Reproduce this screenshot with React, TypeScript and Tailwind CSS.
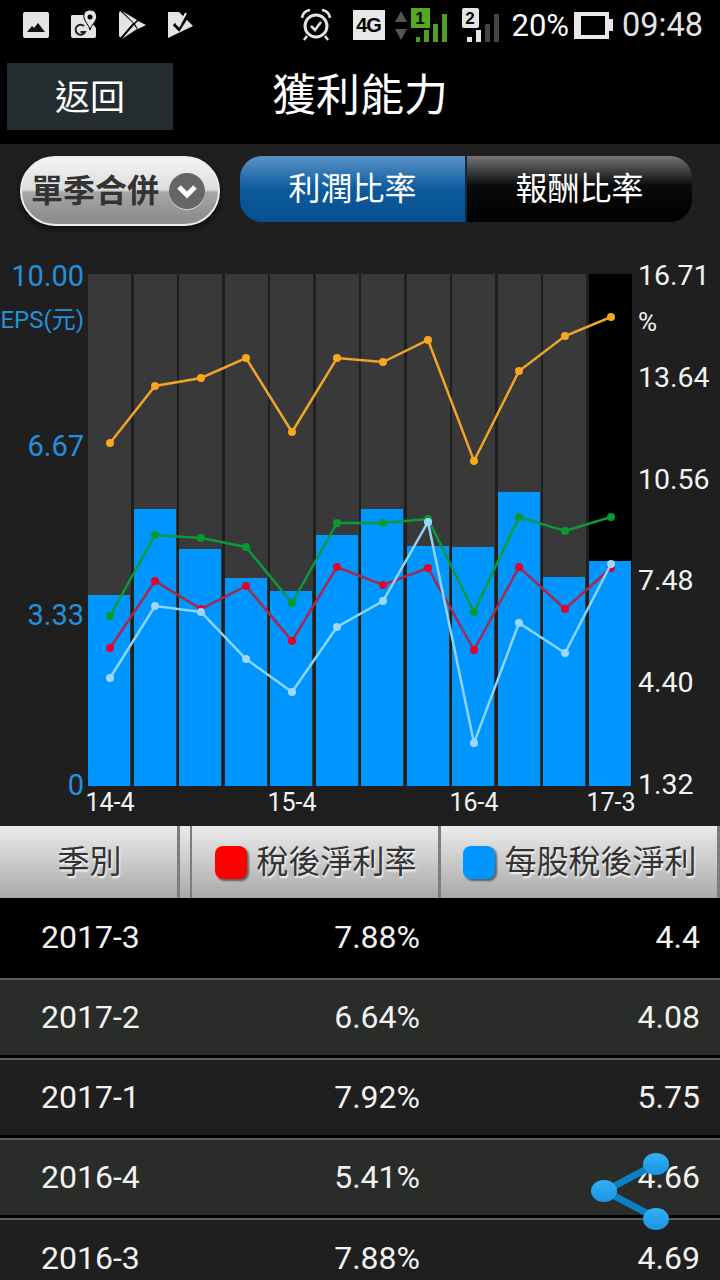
const xs = [110, 155, 201, 246, 292, 337, 383, 428, 474, 519, 565, 611];

const barTops = [595, 509, 549, 578, 591, 535, 509, 546, 547, 492, 577, 561];

const series = [
  { line: '#f0a428', dot: '#f7a81b', ys: [443, 386, 378, 358, 432, 358, 362, 340, 461, 371, 336, 317] },
  { line: '#0a9a3c', dot: '#089a2c', ys: [616, 535, 538, 547, 603, 523, 523, 519, 612, 517, 531, 517] },
  { line: '#a82a48', dot: '#e6002a', ys: [648, 581, 609, 586, 641, 567, 585, 568, 650, 567, 609, 568] },
  { line: '#8fd4f8', dot: '#9bd8fb', ys: [678, 606, 612, 659, 692, 627, 601, 522, 743, 623, 653, 564] },
];

const xLabels: [string, number][] = [['14-4', 22], ['15-4', 204], ['16-4', 386], ['17-3', 523]];

const rows = [
  ['2017-3', '7.88%', '4.4'],
  ['2017-2', '6.64%', '4.08'],
  ['2017-1', '7.92%', '5.75'],
  ['2016-4', '5.41%', '4.66'],
  ['2016-3', '7.88%', '4.69'],
];

const rowStyles = [
  'bg-black',
  'bg-[#2a2c2a] border-t-2 border-b-[3px] border-t-[#5e605e] border-b-black',
  'bg-[#1f1f1f] border-t-2 border-b-[3px] border-t-[#5e605e] border-b-black',
  'bg-[#2a2c2a] border-t-2 border-b-[3px] border-t-[#5e605e] border-b-black',
  'bg-[#1f1f1f] border-t-2 border-t-[#5e605e]',
];

const sans = "font-['Roboto','Noto_Sans_CJK_TC',sans-serif]";
const cjk = "font-['Noto_Sans_CJK_TC',sans-serif]";

function StatusIcons() {
  return (
    <div className="flex items-center">
      {/* picture */}
      <svg width="26" height="26" viewBox="0 0 26 26" className="ml-[23px]">
        <rect x="0" y="0" width="26" height="26" rx="2" fill="#e4e4e4" />
        <path d="M4 20 L9 14 L11 16 L15 11 L22 20 Z" fill="#111" />
      </svg>
      {/* maps */}
      <svg width="28" height="30" viewBox="0 0 28 30" className="ml-[21px]">
        <path d="M2 5 H16 L26 18 V26 Q26 28 24 28 H3 Q1 28 1 26 V6 Z" fill="#e4e4e4" />
        <path d="M20 0 C15 0 13 4 14 8 C15 12 19 15 20 20 C21 15 26 12 26.500 8 C27 4 25 0 20 0 Z" fill="#e4e4e4" stroke="#000" strokeWidth="1" />
        <circle cx="20" cy="7" r="2.500" fill="#000" />
        <path d="M14 16 A5 5 0 1 0 15 22 H10.500" fill="none" stroke="#222" strokeWidth="2" />
      </svg>
      {/* play store */}
      <svg width="28" height="30" viewBox="0 0 28 30" className="ml-[21px]">
        <path d="M1 1 L14 13 L2 27 Q0 28 0 25 V3 Z M3 1 L18 10 L15 13 Z M16 14 L19 11 L27 15 L19 19 Z M15 15 L18 19 L3 29 Z" fill="#e4e4e4" />
      </svg>
      {/* tasks */}
      <svg width="26" height="28" viewBox="0 0 26 28" className="ml-[20px]">
        <path d="M1 1 L12 1 L26 15 L1 27 Z" fill="#e4e4e4" />
        <path d="M7 13 L12 18 L22 2" fill="none" stroke="#000" strokeWidth="3.500" />
        <path d="M9 12 L12 15 L19 2" fill="none" stroke="#e4e4e4" strokeWidth="2" />
      </svg>
    </div>
  );
}

function StatusRight() {
  return (
    <div className="flex items-center">
      {/* alarm */}
      <svg width="30" height="32" viewBox="0 0 30 32">
        <circle cx="15" cy="17" r="11" fill="none" stroke="#e4e4e4" strokeWidth="3" />
        <path d="M10 17 L14 21 L20 13" fill="none" stroke="#e4e4e4" strokeWidth="2.500" />
        <path d="M1 9 Q2 2 9 1 M29 9 Q28 2 21 1 M6 27 L3 31 M24 27 L27 31" fill="none" stroke="#e4e4e4" strokeWidth="2.500" />
      </svg>
      <span className="ml-[22px] flex h-[30px] w-[32px] items-center justify-center bg-[#e8e8e8] font-['Liberation_Sans',sans-serif] text-[20px] font-bold tracking-[-1px] text-black">
        4G
      </span>
      <svg width="14" height="32" viewBox="0 0 14 32" className="ml-[9px]">
        <path d="M7 2 L13 13 H1 Z M1 20 H13 L7 31 Z" fill="#555" />
      </svg>
      <div className="ml-[3px] flex">
        <div className="relative flex h-[34px] w-[36px] items-end gap-[4px] pl-[5px]">
          <span className="h-[5px] w-[5px] bg-[#4f9d27]" />
          <span className="h-[12px] w-[5px] bg-[#4f9d27]" />
          <span className="h-[18px] w-[5px] bg-[#4f9d27]" />
          <span className="h-[28px] w-[5px] bg-[#4f9d27]" />
          <span className="absolute left-0 top-0 flex h-[20px] w-[19px] items-center justify-center bg-[#55a820] font-['Liberation_Sans',sans-serif] text-[17px] font-bold leading-none text-black">
            1
          </span>
        </div>
        <div className="relative ml-[15px] flex h-[34px] w-[37px] items-end gap-[4px] pl-[5px]">
          <span className="h-[5px] w-[5px] bg-[#e4e4e4]" />
          <span className="h-[12px] w-[5px] bg-[#e4e4e4]" />
          <span className="h-[18px] w-[5px] bg-[#444]" />
          <span className="h-[28px] w-[5px] bg-[#444]" />
          <span className="absolute left-0 top-0 flex h-[20px] w-[17px] items-center justify-center rounded-[2px] bg-[#e4e4e4] font-['Liberation_Sans',sans-serif] text-[17px] font-bold leading-none text-black">
            2
          </span>
        </div>
      </div>
      <span className={`ml-[13px] ${sans} text-[31px] leading-none text-white`}>20%</span>
      <div className="ml-[5px] flex items-center">
        <div className="h-[27px] w-[35px] border-[4px] border-l-[7px] border-[#e8e8e8]" />
        <div className="h-[12px] w-[4px] bg-[#e8e8e8]" />
      </div>
      <span className={`ml-[9px] ${sans} text-[32.5px] leading-none text-[#e4e4e4]`}>09:48</span>
    </div>
  );
}

function Chart() {
  return (
    <div className="flex h-[587px] items-start bg-[#1f1f1f] pt-[23px]">
      {/* left axis */}
      <div className={`relative flex h-[537px] w-[84px] shrink-0 flex-col justify-between ${sans} text-right text-[29px] leading-[28px] text-[#2490dc]`}>
        <span>10.00</span>
        <span className="absolute right-0 top-[44px] whitespace-nowrap text-[24px]">EPS(元)</span>
        <span>6.67</span>
        <span>3.33</span>
        <span>0</span>
      </div>

      {/* plot */}
      <div className="relative ml-[4px] mt-[12px] h-[512px] w-[544px] shrink-0">
        <div className="flex h-full justify-between">
          {barTops.map((t, i) => (
            <div key={i} className={`flex w-[43px] flex-col justify-end ${i === 11 ? 'bg-black' : 'bg-[#383938]'}`}>
              <div className="w-[42px] bg-[#0096ff]" style={{ height: 786 - t }} />
            </div>
          ))}
        </div>

        <svg width="544" height="512" viewBox="88 274 544 512" className="absolute left-0 top-0 overflow-visible">
          {series.map((s, i) => (
            <g key={i}>
              <polyline points={xs.map((x, j) => `${x},${s.ys[j]}`).join(' ')} fill="none" stroke={s.line} strokeWidth="2.500" />
              {xs.map((x, j) => (
                <circle key={j} cx={x} cy={s.ys[j]} r="4" fill={s.dot} />
              ))}
            </g>
          ))}
        </svg>

        {xLabels.map(([label, x]) => (
          <span
            key={label}
            className={`absolute top-[516px] -translate-x-1/2 whitespace-nowrap ${sans} text-[25px] leading-none text-[#f2f2f2]`}
            style={{ left: x }}
          >
            {label}
          </span>
        ))}
      </div>

      {/* right axis */}
      <div className={`relative ml-[6px] flex h-[537px] flex-col justify-between ${sans} text-[28.5px] leading-[28px] text-[#f2f2f2]`}>
        <span>16.71</span>
        <span className="absolute left-0 top-[46px] text-[26px]">%</span>
        <span>13.64</span>
        <span>10.56</span>
        <span>7.48</span>
        <span>4.40</span>
        <span>1.32</span>
      </div>
    </div>
  );
}

function HeaderCell({ className, swatch, label }: { className: string; swatch?: string; label: string }) {
  return (
    <div className={`flex h-full items-center justify-center gap-[9px] border-r-[3px] border-[#7d7d7d] bg-gradient-to-b from-[#ececec] to-[#a9a9a9] pl-[2px] ${className}`}>
      {swatch && <span className={`h-[33px] w-[32px] rounded-[8px] shadow-[2px_2px_2px_rgba(0,0,0,0.5)] ${swatch}`} />}
      <span className={`${cjk} pb-[6px] text-[32px] leading-none text-[#333] [text-shadow:1px_2px_2px_rgba(255,255,255,0.9)]`}>
        {label}
      </span>
    </div>
  );
}

export default function App() {
  return (
    <div className="relative h-[1280px] w-[720px] overflow-hidden bg-black">
      {/* status bar */}
      <div className="flex h-[50px] items-center justify-between pr-[17px]">
        <StatusIcons />
        <StatusRight />
      </div>

      {/* title bar */}
      <div className="relative flex h-[94px] items-start">
        <button className={`ml-[7px] mt-[13px] flex h-[67px] w-[166px] items-center justify-center bg-[#252c30] pb-[4px] ${cjk} text-[35px] leading-none text-white`}>
          返回
        </button>
        <h1 className={`absolute left-0 right-0 top-[20px] text-center ${cjk} text-[44px] leading-none text-white`}>
          獲利能力
        </h1>
      </div>

      {/* filter row */}
      <div className="flex h-[95px] items-start bg-[#1f1f1f] pt-[12px]">
        <div className="ml-[20px] flex h-[70px] w-[200px] items-center rounded-[35px] border-2 border-[#ececec] bg-[linear-gradient(#f5f5f5,#dcdcdc_48%,#a6a6a6_52%,#8f8f8f_90%)] pl-[9px] shadow-[0_3px_6px_rgba(0,0,0,0.6)]">
          <span className={`${cjk} pb-[6px] text-[32px] font-bold leading-none text-[#333]`}>單季合併</span>
          <span className="ml-[10px] flex h-[36px] w-[36px] items-center justify-center rounded-full bg-[#666] shadow-[0_1px_0_rgba(255,255,255,0.6)]">
            <svg width="22" height="16" viewBox="0 0 22 16">
              <path d="M3 4 L11 12 L19 4" fill="none" stroke="#fff" strokeWidth="5" />
            </svg>
          </span>
        </div>
        <div className="ml-[20px] flex h-[66px] w-[452px]">
          <div className={`flex w-[227px] items-center justify-center rounded-l-[22px] border-r-2 border-[#0e2a44] bg-[linear-gradient(#5a93c9,#0d5a9c_50%,#05508f)] pb-[6px] ${cjk} text-[32px] leading-none text-white`}>
            利潤比率
          </div>
          <div className={`flex w-[225px] items-center justify-center rounded-r-[22px] bg-[linear-gradient(#757575,#0a0a0a_45%,#000)] pb-[6px] ${cjk} text-[32px] leading-none text-white`}>
            報酬比率
          </div>
        </div>
      </div>

      <Chart />

      {/* table header */}
      <div className="flex h-[72px] bg-[#1f1f1f]">
        <HeaderCell className="w-[180px]" label="季別" />
        <div className="h-full w-[12px] border-r-[2px] border-[#7d7d7d] bg-gradient-to-b from-[#ececec] to-[#a9a9a9]" />
        <HeaderCell className="w-[249px]" swatch="bg-[#ff0000]" label="稅後淨利率" />
        <HeaderCell className="w-[279px] border-r-0" swatch="bg-[#0096ff]" label="每股稅後淨利" />
      </div>

      {/* table rows */}
      <div className={`${sans} text-[32px] leading-none text-[#f2f2f2]`}>
        {rows.map((r, i) => (
          <div key={r[0]} className={`flex h-[80px] items-center pb-[2px] ${rowStyles[i]}`}>
            <span className="w-[200px] pl-[41px]">{r[0]}</span>
            <span className="w-[220px] text-right">{r[1]}</span>
            <span className="w-[280px] text-right">{r[2]}</span>
          </div>
        ))}
      </div>

      {/* share button */}
      <svg width="84" height="84" viewBox="0 0 84 84" className="absolute left-[588px] top-[1150px]">
        <defs>
          <linearGradient id="shareDot" x1="0" y1="0" x2="0" y2="1">
            <stop offset="0" stopColor="#35b0f4" />
            <stop offset="1" stopColor="#1695e6" />
          </linearGradient>
        </defs>
        <path d="M17 41 L68 14 M17 41 L68 68" stroke="#0a7fc4" strokeWidth="7" fill="none" />
        <ellipse cx="16" cy="41" rx="13" ry="11" fill="url(#shareDot)" />
        <ellipse cx="68" cy="14" rx="13" ry="11" fill="url(#shareDot)" />
        <ellipse cx="68" cy="69" rx="13" ry="11" fill="url(#shareDot)" />
      </svg>
    </div>
  );
}
